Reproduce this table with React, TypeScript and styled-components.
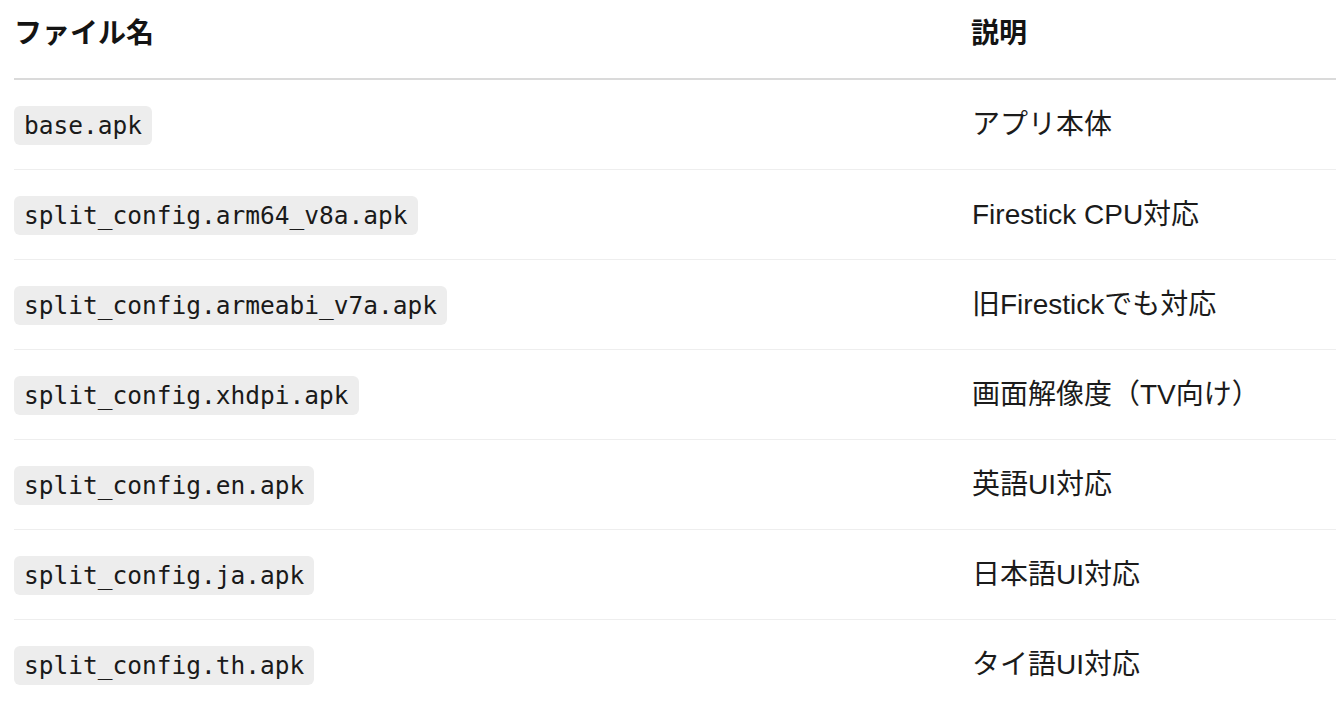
import React, { FunctionComponent } from "react";
import styled, { createGlobalStyle } from "styled-components";

const GlobalStyle = createGlobalStyle`
  html, body {
    margin: 0;
    padding: 0;
    background: #ffffff;
  }
  body {
    font-family: "Liberation Sans", "Noto Sans CJK JP", sans-serif;
    color: #1b1b1b;
    overflow: hidden;
  }
`;

const TableWrapper = styled.div`
  padding-left: 14px;
`;

const Table = styled.table`
  width: 100%;
  border-collapse: collapse;
  font-size: 28px;
`;

const HeadCell = styled.th<{ $desc?: boolean }>`
  text-align: left;
  font-weight: 700;
  color: #141414;
  line-height: 42px;
  padding: 13px 0 23px ${(p) => (p.$desc ? "13px" : "0")};
  border-bottom: 2px solid #dadada;
  width: ${(p) => (p.$desc ? "auto" : "944px")};
`;

const Row = styled.tr`
  border-bottom: 1px solid #eeeeee;

  &:last-child {
    border-bottom: none;
  }
`;

const Cell = styled.td<{ $desc?: boolean }>`
  height: 89px;
  padding: 0 0 0 ${(p) => (p.$desc ? "14px" : "0")};
  vertical-align: middle;
  line-height: 1.4;
`;

const Code = styled.code`
  display: inline-block;
  font-family: "DejaVu Sans Mono", "Liberation Mono", monospace;
  font-size: 24.5px;
  line-height: 29px;
  padding: 5px 10px;
  background: #ededed;
  border-radius: 6px;
  color: #1a1a1a;
`;

interface IApkFile {
  name: string;
  description: string;
}

const FILES: IApkFile[] = [
  { name: "base.apk", description: "アプリ本体" },
  { name: "split_config.arm64_v8a.apk", description: "Firestick CPU対応" },
  { name: "split_config.armeabi_v7a.apk", description: "旧Firestickでも対応" },
  { name: "split_config.xhdpi.apk", description: "画面解像度（TV向け）" },
  { name: "split_config.en.apk", description: "英語UI対応" },
  { name: "split_config.ja.apk", description: "日本語UI対応" },
  { name: "split_config.th.apk", description: "タイ語UI対応" },
];

const App: FunctionComponent = () => {
  return (
    <>
      <GlobalStyle />
      <TableWrapper>
        <Table>
          <thead>
            <tr>
              <HeadCell>ファイル名</HeadCell>
              <HeadCell $desc>説明</HeadCell>
            </tr>
          </thead>
          <tbody>
            {FILES.map((file) => (
              <Row key={file.name}>
                <Cell>
                  <Code>{file.name}</Code>
                </Cell>
                <Cell $desc>{file.description}</Cell>
              </Row>
            ))}
          </tbody>
        </Table>
      </TableWrapper>
    </>
  );
};

export default App;
